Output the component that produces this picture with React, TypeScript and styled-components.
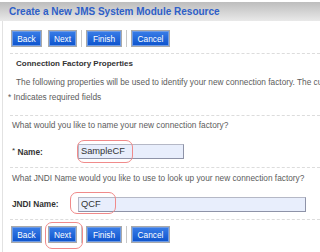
import React from "react";
import styled, { createGlobalStyle } from "styled-components";

const Global = createGlobalStyle`
  html, body { margin: 0; padding: 0; background: #fff; }
  body { font-family: "Liberation Sans", Arial, sans-serif; width: 320px; height: 252px; overflow: hidden; }
`;

const Page = styled.div`
  width: 320px;
  height: 252px;
  overflow: hidden;
  padding-top: 2px;
  box-sizing: border-box;
`;

const Header = styled.div`
  height: 19px;
  display: flex;
  align-items: center;
  padding-left: 9px;
  background: linear-gradient(#bdbdbd, #e9e9e9);
`;

const Title = styled.span`
  color: #2e5fc8;
  font-size: 10px;
  font-weight: bold;
  white-space: nowrap;
`;

const Body = styled.div`
  margin-left: 2px;
  border-left: 1px solid #e2e2e2;
  height: 240px;
  overflow: hidden;
`;

const ButtonBar = styled.div<{ $top: number }>`
  display: flex;
  align-items: center;
  gap: 4px;
  padding-left: 8px;
  padding-top: ${(p) => p.$top}px;
  height: 17px;
  & > :first-child { margin-right: 2px; }
`;

const Button = styled.div<{ $w: number }>`
  position: relative;
  width: ${(p) => p.$w}px;
  height: 17px;
  box-sizing: border-box;
  display: flex;
  align-items: center;
  justify-content: center;
  color: #fff;
  font-size: 8.3px;
  background: linear-gradient(#3a7ee8, #0c52cc);
  border: 1px solid #a9a9a9;
  box-shadow: inset 0 0 0 1px #6d9be6;
`;

const Divider = styled.div`
  width: 1px;
  height: 17px;
  background: #c8c8c8;
`;

const Dashed = styled.div<{ $top: number }>`
  margin-top: ${(p) => p.$top}px;
  margin-left: 7px;
  border-top: 1px dashed #dcdcdc;
`;

const SectionTitle = styled.div`
  margin-top: 4px;
  padding-left: 13px;
  font-size: 8px;
  font-weight: bold;
  color: #333;
  white-space: nowrap;
  line-height: 12px;
`;

const Text = styled.div<{ $top: number; $left: number }>`
  margin-top: ${(p) => p.$top}px;
  padding-left: ${(p) => p.$left}px;
  font-size: 8.3px;
  color: #5c5c5c;
  white-space: nowrap;
  line-height: 12px;
  overflow: hidden;
`;

const FieldRow = styled.div<{ $top: number }>`
  margin-top: ${(p) => p.$top}px;
  display: flex;
  align-items: center;
  padding-left: 9px;
  height: 16px;
`;

const Label = styled.div`
  width: 66px;
  font-size: 8.3px;
  font-weight: bold;
  color: #333;
  white-space: nowrap;
  sup { font-size: 8px; vertical-align: 2px; font-weight: normal; }
`;

const InputWrap = styled.div`
  position: relative;
`;

const Input = styled.div<{ $w: number }>`
  width: ${(p) => p.$w}px;
  height: 15px;
  box-sizing: border-box;
  background: #e8eefc;
  border: 1px solid #8e93a8;
  border-top-color: #b5b8c6;
  border-left-color: #b5b8c6;
  font-size: 9.3px;
  color: #333;
  padding-left: 2px;
  display: flex;
  align-items: center;
`;

const Ring = styled.div<{ $l: number; $t: number; $w: number; $h: number }>`
  position: absolute;
  left: ${(p) => p.$l}px;
  top: ${(p) => p.$t}px;
  width: ${(p) => p.$w}px;
  height: ${(p) => p.$h}px;
  border: 1px solid #f08a8a;
  border-radius: 7px;
  pointer-events: none;
  box-sizing: border-box;
`;

const Buttons = ({ top, ring }: { top: number; ring?: boolean }) => (
  <ButtonBar $top={top}>
    <Button $w={31}>Back</Button>
    <Button $w={29}>
      Next
      {ring && <Ring $l={-4} $t={-5} $w={38} $h={27} />}
    </Button>
    <Divider />
    <Button $w={36}>Finish</Button>
    <Divider />
    <Button $w={39}>Cancel</Button>
  </ButtonBar>
);

export default function App() {
  return (
    <Page>
      <Global />
      <Header>
        <Title>Create a New JMS System Module Resource</Title>
      </Header>
      <Body>
        <Buttons top={9} />
        <Dashed $top={6} />
        <SectionTitle>Connection Factory Properties</SectionTitle>
        <Text $top={6} $left={13}>
          The following properties will be used to identify your new connection factory. The current
        </Text>
        <Text $top={3} $left={5}>* Indicates required fields</Text>
        <Dashed $top={12} />
        <Text $top={3} $left={9}>What would you like to name your new connection factory?</Text>
        <FieldRow $top={12}>
          <Label>
            <sup>*</sup> Name:
          </Label>
          <InputWrap>
            <Input $w={106}>SampleCF</Input>
            <Ring $l={-1} $t={-4} $w={56} $h={23} />
          </InputWrap>
        </FieldRow>
        <Dashed $top={8} />
        <Text $top={4} $left={9}>What JNDI Name would you like to use to look up your new connection factory?</Text>
        <FieldRow $top={12}>
          <Label>JNDI Name:</Label>
          <InputWrap>
            <Input $w={228}>QCF</Input>
            <Ring $l={-8} $t={-5} $w={46} $h={22} />
          </InputWrap>
        </FieldRow>
        <Dashed $top={7} />
        <Buttons top={6} ring />
      </Body>
    </Page>
  );
}
